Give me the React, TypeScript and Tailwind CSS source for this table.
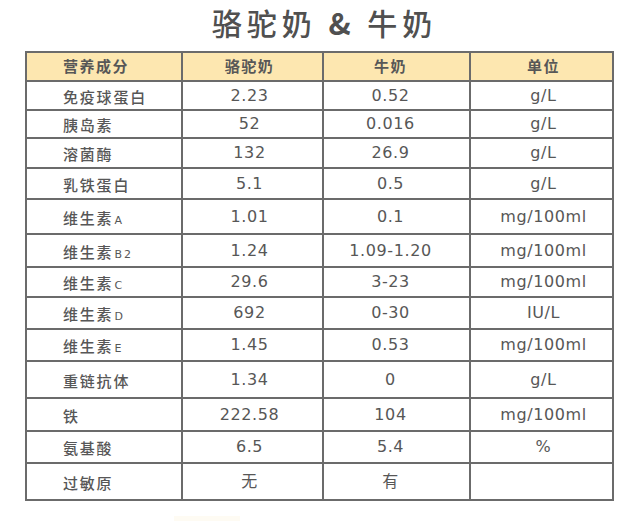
import React from "react";

type Row = {
  name: React.ReactNode;
  camel: string;
  cow: string;
  unit: string;
  h: string;
};

const cjk = "font-['Noto_Sans_CJK_SC',sans-serif]";
const num = "font-['DejaVu_Sans','Noto_Sans_CJK_SC',sans-serif]";

// small latin suffix used in the vitamin labels
const Sub = ({ children }: { children: React.ReactNode }) => (
  <span className={`${num} text-[11px] tracking-[2px] ml-[1px]`}>{children}</span>
);

const rows: Row[] = [
  { name: "免疫球蛋白", camel: "2.23", cow: "0.52", unit: "g/L", h: "h-[29px]" },
  { name: "胰岛素", camel: "52", cow: "0.016", unit: "g/L", h: "h-[28px]" },
  { name: "溶菌酶", camel: "132", cow: "26.9", unit: "g/L", h: "h-[30px]" },
  { name: "乳铁蛋白", camel: "5.1", cow: "0.5", unit: "g/L", h: "h-[31px]" },
  { name: <>维生素<Sub>A</Sub></>, camel: "1.01", cow: "0.1", unit: "mg/100ml", h: "h-[35px]" },
  { name: <>维生素<Sub>B2</Sub></>, camel: "1.24", cow: "1.09-1.20", unit: "mg/100ml", h: "h-[33px]" },
  { name: <>维生素<Sub>C</Sub></>, camel: "29.6", cow: "3-23", unit: "mg/100ml", h: "h-[30px]" },
  { name: <>维生素<Sub>D</Sub></>, camel: "692", cow: "0-30", unit: "IU/L", h: "h-[32px]" },
  { name: <>维生素<Sub>E</Sub></>, camel: "1.45", cow: "0.53", unit: "mg/100ml", h: "h-[32px]" },
  { name: "重链抗体", camel: "1.34", cow: "0", unit: "g/L", h: "h-[37px]" },
  { name: "铁", camel: "222.58", cow: "104", unit: "mg/100ml", h: "h-[33px]" },
  { name: "氨基酸", camel: "6.5", cow: "5.4", unit: "%", h: "h-[32px]" },
  { name: "过敏原", camel: "无", cow: "有", unit: "", h: "h-[37px]" },
];

const cell = "border-r-2 border-b-2 border-[#6b6b6b] flex items-center";

export default function App() {
  return (
    <div className="w-[637px] h-[521px] bg-white text-[#575757] overflow-hidden">
      {/* title */}
      <div className="h-[51px] flex justify-center pl-[12px] pt-[5px]">
        <h1 className={`${cjk} text-[30px] leading-[34px] tracking-[5px] font-medium text-[#505050]`}>
          骆驼奶 <span className="font-bold">&amp;</span> 牛奶
        </h1>
      </div>

      <div className="ml-[25px] w-[589px] border-t-2 border-l-2 border-[#6b6b6b]">
        <div className="flex h-[29px] bg-[#fde7b0] text-[15px] tracking-[1.5px] font-bold">
          <div className={`${cell} ${cjk} w-[156px] pl-[36px]`}>营养成分</div>
          <div className={`${cell} ${cjk} w-[141px] justify-center pr-[6px]`}>骆驼奶</div>
          <div className={`${cell} ${cjk} w-[147px] justify-center pr-[12px]`}>牛奶</div>
          <div className={`${cell} ${cjk} w-[143px] justify-center pl-[4px]`}>单位</div>
        </div>
        {rows.map((r, i) => (
          <div key={i} className={`flex ${r.h}`}>
            <div className={`${cell} ${cjk} w-[156px] pl-[36px] pt-[3px] text-[15px] tracking-[1.8px] font-medium`}>
              <span>{r.name}</span>
            </div>
            <div className={`${cell} ${num} w-[141px] justify-center pr-[6px] text-[16px] tracking-[0.6px]`}>
              {r.camel}
            </div>
            <div className={`${cell} ${num} w-[147px] justify-center pr-[12px] text-[16px] tracking-[0.6px]`}>
              {r.cow}
            </div>
            <div className={`${cell} ${num} w-[143px] justify-center pl-[4px] text-[16px] tracking-[0.6px]`}>
              {r.unit}
            </div>
          </div>
        ))}
      </div>

      <div className="ml-[174px] mt-[15px] w-[66px] h-[6px] bg-[#fefbf3]" />
    </div>
  );
}
